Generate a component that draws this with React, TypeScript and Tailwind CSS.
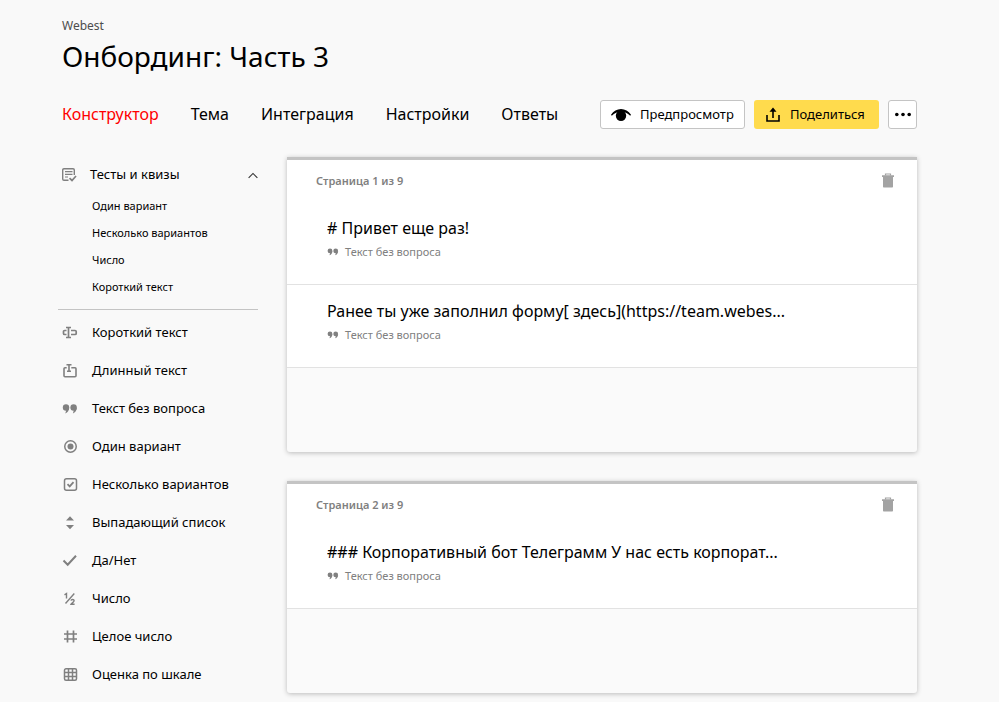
import { useState } from 'react';
import type { ReactNode } from 'react';

const tabs = ['Конструктор', 'Тема', 'Интеграция', 'Настройки', 'Ответы'];

const quizItems = ['Один вариант', 'Несколько вариантов', 'Число', 'Короткий текст'];

const pages = [
    { title: 'Страница 1 из 9', blocks: ['# Привет еще раз!', 'Ранее ты уже заполнил форму[ здесь](https://team.webes...'] },
    { title: 'Страница 2 из 9', blocks: ['### Корпоративный бот Телеграмм У нас есть корпорат...'] },
];

function Icon({ children, className = 'w-4 h-4' }: { children: ReactNode; className?: string }) {
    return (
        <svg viewBox="0 0 16 16" className={`shrink-0 ${className}`} fill="none" stroke="currentColor" strokeWidth="1.5" aria-hidden="true">
            {children}
        </svg>
    );
}

function QuoteIcon({ className }: { className?: string }) {
    return (
        <Icon className={className}>
            <g fill="currentColor" stroke="none">
                <circle cx="4" cy="6.5" r="3.2" />
                <path d="M7.200 6.500c0 3-1.500 4.800-3.900 5.900l.9-3.200z" />
                <circle cx="11.6" cy="6.5" r="3.2" />
                <path d="M14.800 6.500c0 3-1.500 4.800-3.900 5.900l.9-3.200z" />
            </g>
        </Icon>
    );
}

const fields = [
    {
        label: 'Короткий текст',
        icon: (
            <Icon>
                <path d="M4 2.500h5M4 12.500h5M6.500 2.500v10" strokeWidth="1.700" />
                <path d="M4.500 5.500H2.700c-.8 0-1.200.4-1.200 1v2c0 .6.4 1 1.200 1h1.800M9 5.500h4c.8 0 1.200.4 1.200 1v2c0 .6-.4 1-1.200 1H9" strokeWidth="1.700" />
            </Icon>
        ),
    },
    {
        label: 'Длинный текст',
        icon: (
            <Icon>
                <path d="M4.500 1.700h5M7 2v6M5 8.200h4" strokeWidth="1.600" />
                <path d="M4.700 4.700H3c-.7 0-1 .3-1 1v7c0 .7.300 1 1 1h10c.7 0 1-.3 1-1v-7c0-.7-.3-1-1-1H9.300" strokeWidth="1.600" />
            </Icon>
        ),
    },
    { label: 'Текст без вопроса', icon: <QuoteIcon /> },
    {
        label: 'Один вариант',
        icon: (
            <Icon>
                <circle cx="8.500" cy="7.500" r="5.750" />
                <circle cx="8.500" cy="7.500" r="3" fill="currentColor" stroke="none" />
            </Icon>
        ),
    },
    {
        label: 'Несколько вариантов',
        icon: (
            <Icon>
                <rect x="2.500" y="1.750" width="12" height="11.500" rx="2" />
                <path d="M5.500 7.200l2.200 2.200 3.800-4.200" strokeWidth="1.800" />
            </Icon>
        ),
    },
    {
        label: 'Выпадающий список',
        icon: (
            <Icon>
                <path d="M8 1.200l4 4.200H4zM8 14.200l4-4.200H4z" fill="currentColor" stroke="none" />
            </Icon>
        ),
    },
    {
        label: 'Да/Нет',
        icon: (
            <Icon>
                <path d="M1.500 7.500l4.200 4.200L14 2.700" strokeWidth="2" />
            </Icon>
        ),
    },
    {
        label: 'Число',
        icon: (
            <Icon>
                <path d="M12.300 2.500L3.500 12.500M2.500 3.800l2-1.300v5M9 9.700c.3-1.600 3.200-1.500 3.100.1 0 1.200-2.200 2-3 3.400h3.500" strokeWidth="1.400" />
            </Icon>
        ),
    },
    {
        label: 'Целое число',
        icon: (
            <Icon>
                <path d="M5.500 1.500v12M11.500 1.500v12M2 5h13M2 10h13" strokeWidth="1.700" />
            </Icon>
        ),
    },
    {
        label: 'Оценка по шкале',
        icon: (
            <Icon>
                <rect x="2.500" y="1.750" width="12" height="11.500" rx="1.500" />
                <path d="M6.500 2v11M10.500 2v11M2.500 5.500h12M2.500 9.500h12" strokeWidth="1.500" />
            </Icon>
        ),
    },
];

function Sidebar() {
    const [open, setOpen] = useState(true);

    return (
        <aside className="w-[200px] shrink-0">
            <button
                type="button"
                aria-expanded={open}
                onClick={() => setOpen(!open)}
                className="flex w-full items-center pl-1 h-9"
            >
                <Icon className="w-4 h-4 text-[#808080]">
                    <path d="M12.300 8V3c0-.9-.4-1.300-1.300-1.300H2C1.100 1.700.7 2.100.7 3v9c0 .9.4 1.300 1.300 1.300h4.500" strokeWidth="1.400" />
                    <path d="M3 4.700h7.500M3 7.300h7.500M3 10h3" strokeWidth="1.200" />
                    <path d="M7.500 11.200l2.500 2.300 4-4.500" strokeWidth="1.700" />
                </Icon>
                <span className="ml-3 text-[13px]">Тесты и квизы</span>
                <Icon className="ml-auto w-[10px] h-[10px] text-[#333]">
                    <path d="M1 12.500L8 5.500l7 7" strokeWidth="1.800" />
                </Icon>
            </button>
            {open && (
                <ul className="pb-2">
                    {quizItems.map((item) => (
                        <li key={item}>
                            <button type="button" className="block h-[27px] pl-[34px] text-[11px]">
                                {item}
                            </button>
                        </li>
                    ))}
                </ul>
            )}
            <ul className="border-t border-[#c4c4c4] pt-1">
                {fields.map((field) => (
                    <li key={field.label}>
                        <button type="button" className="flex w-full items-center gap-[14px] h-[38px] pl-1 text-[13px]">
                            <span className="text-[#808080]">{field.icon}</span>
                            {field.label}
                        </button>
                    </li>
                ))}
            </ul>
        </aside>
    );
}

function PageCard({ title, blocks }: { title: string; blocks: string[] }) {
    return (
        <section className="rounded-b-[3px] border-t-3 border-[#c4c4c4] bg-[#fafafa] shadow-[0_1px_5px_rgba(0,0,0,0.25)]">
            <header className="flex items-center justify-between bg-white pl-[29px] pr-[21px] h-[42px]">
                <h2 className="text-[11px] font-semibold text-[#808080]">{title}</h2>
                <button type="button" aria-label="Удалить страницу" className="text-[#a3a3a3]">
                    <Icon>
                        <path d="M5.500 2.500V1h5v1.500" strokeWidth="1.200" />
                        <path d="M2 2.300h12V4H2zM3 4h10v9.500c0 .6-.4 1-1 1H4c-.6 0-1-.4-1-1z" fill="currentColor" stroke="none" />
                    </Icon>
                </button>
            </header>
            {blocks.map((block) => (
                <article key={block} className="border-b border-[#e2e2e2] bg-white px-10 pt-[14px] h-[83px]">
                    <h3 className="text-[16px] leading-6 truncate">{block}</h3>
                    <p className="mt-1 flex items-center gap-[6px] text-[11px] leading-4 text-[#808080]">
                        <QuoteIcon className="w-3 h-3" />
                        Текст без вопроса
                    </p>
                </article>
            ))}
            <div className="h-[84px]" />
        </section>
    );
}

export default function App() {
    return (
        <div className="min-h-screen bg-[#f9f9f9] pl-[58px] pr-[82px] pt-[18px] pb-[9px] font-['Noto_Sans',sans-serif] text-black">
            <div className="pl-1">
                <p className="text-[12px] leading-4 text-[#4d4d4d]">Webest</p>
                <h1 className="mt-[2px] text-[28px] leading-10">Онбординг: Часть 3</h1>
            </div>

            <div className="mt-6 flex items-start justify-between pl-1">
                <nav className="flex gap-8 pt-[2px] text-[16px] leading-6">
                    {tabs.map((tab, i) => (
                        <a key={tab} href="#" className={i === 0 ? 'text-[#ff0000]' : ''}>
                            {tab}
                        </a>
                    ))}
                </nav>
                <div className="flex shrink-0 gap-[9px] text-[13px]">
                    <button type="button" className="flex items-center gap-[9px] rounded-[3px] border border-[#c4c4c4] bg-white pl-[10px] h-[29px] w-[145px]">
                        <svg viewBox="0 0 20 14" className="w-5 h-[14px] shrink-0" aria-hidden="true">
                            <path d="M0 6.800C2.500 3.200 6 1 10 1s7.500 2.200 10 5.800l-.8 1C16.500 5 13.500 4 10 4S3.500 5 .8 7.800z" />
                            <circle cx="10" cy="7.800" r="5.200" />
                        </svg>
                        Предпросмотр
                    </button>
                    <button type="button" className="flex items-center gap-[9px] rounded-[3px] bg-[#ffdb4d] pl-[11px] h-[29px] w-[125px]">
                        <Icon>
                            <path d="M2 8v6h12V8M8 11V3" strokeWidth="1.600" />
                            <path d="M8 .5l3.500 4.300h-7z" fill="currentColor" stroke="none" />
                        </Icon>
                        Поделиться
                    </button>
                    <button type="button" aria-label="Ещё" className="flex items-center justify-center rounded-[3px] border border-[#c4c4c4] bg-white h-[29px] w-[29px]">
                        <Icon>
                            <g fill="currentColor" stroke="none">
                                <circle cx="1.800" cy="7.500" r="1.800" />
                                <circle cx="8" cy="7.500" r="1.800" />
                                <circle cx="14.200" cy="7.500" r="1.800" />
                            </g>
                        </Icon>
                    </button>
                </div>
            </div>

            <div className="mt-7 flex gap-[29px]">
                <Sidebar />
                <main className="flex min-w-0 flex-1 flex-col gap-[29px]">
                    {pages.map((page) => (
                        <PageCard key={page.title} {...page} />
                    ))}
                </main>
            </div>
        </div>
    );
}
